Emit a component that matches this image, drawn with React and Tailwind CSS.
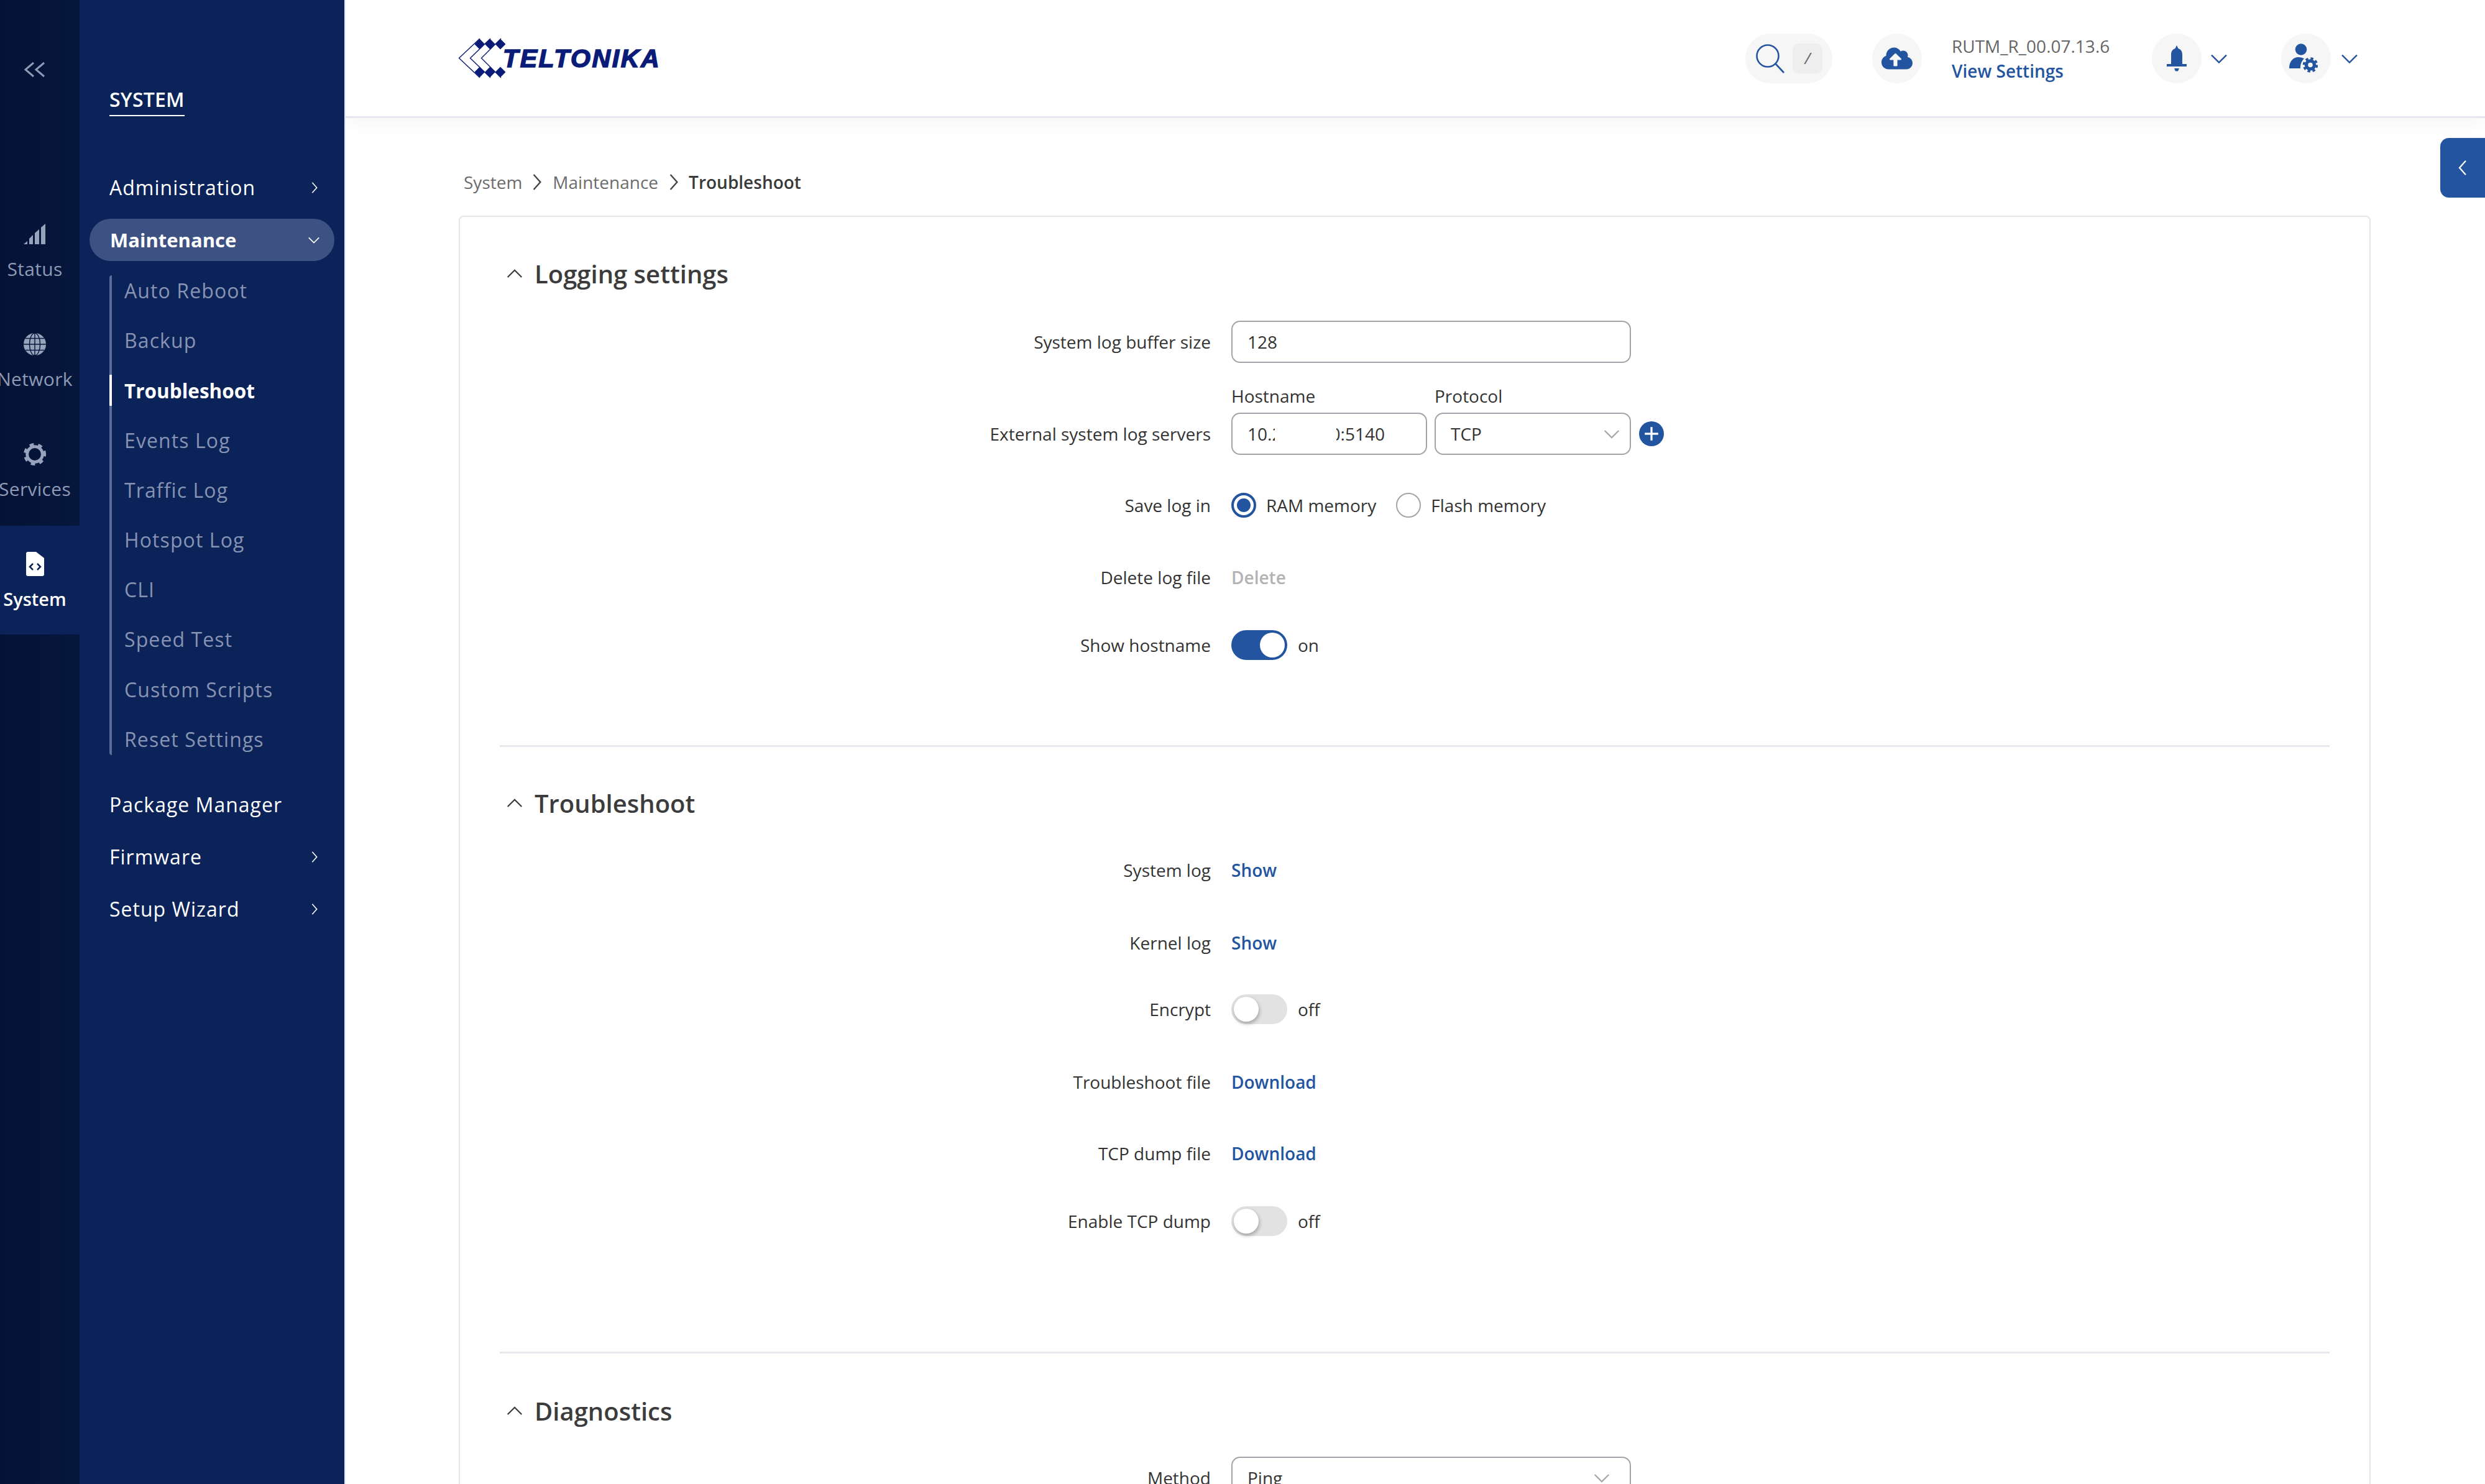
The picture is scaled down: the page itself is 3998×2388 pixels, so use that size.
import React from "react";
import { FaCloudUploadAlt } from "react-icons/fa";

const Chevron = ({ dir = "right", className }) => {
  const points = {
    right: "8,3 16,12 8,21",
    left: "16,3 8,12 16,21",
    down: "3,8 12,17 21,8",
    up: "3,16 12,7 21,16",
  };
  return (
    <svg viewBox="0 0 24 24" fill="none" stroke="currentColor" strokeWidth="1.8" className={className}>
      <polyline points={points[dir]} />
    </svg>
  );
};

const Logo = () => (
  <div className="flex items-center h-[80px] w-[330px] -ml-[8px]">
    <svg viewBox="0 0 100 75" className="w-[100px] h-[75px] -mr-[21px] shrink-0">
      <polyline points="42,6 8.5,37.5 42,69" fill="none" stroke="#0a1c78" strokeWidth="1.4" />
      <polyline points="59,6 26.5,37.5 59,69" fill="none" stroke="#0a1c78" strokeWidth="1.4" />
      <polyline points="76,6 44.5,37.5 76,69" fill="none" stroke="#0a1c78" strokeWidth="1.4" />
      <polygon points="41.7,6.5 50,15 41.7,23.5 33.4,15" fill="#0a1c78" />
      <polygon points="58.4,6.5 66.7,15 58.4,23.5 50,15" fill="#0a1c78" />
      <polygon points="75,6.5 83.5,15 75,23.5 66.7,15" fill="#0a1c78" />
      <polygon points="41.7,51.5 50,60 41.7,68.5 33.4,60" fill="#0a1c78" />
      <polygon points="58.4,51.5 66.7,60 58.4,68.5 50,60" fill="#0a1c78" />
      <polygon points="75,51.5 83.5,60 75,68.5 66.7,60" fill="#0a1c78" />
    </svg>
    <span className="font-['Liberation_Sans',sans-serif] font-bold italic text-[41px] leading-none text-[#0a1c78] tracking-[2.6px] [-webkit-text-stroke:1.6px_#0a1c78] mt-[2px]">
      TELTONIKA
    </span>
  </div>
);

const SearchIcon = () => (
  <svg viewBox="0 0 48 48" fill="none" stroke="#2354a0" strokeWidth="2.6" className="w-[48px] h-[48px]">
    <circle cx="20" cy="20" r="17.5" />
    <line x1="32.5" y1="32.5" x2="46" y2="47" />
  </svg>
);

const BellIcon = () => (
  <svg viewBox="0 0 32 42" fill="#2354a0" className="w-[32px] h-[42px]">
    <path d="M16 0l2.5 5c4.500 1.400 6.500 5 6.500 10v15H7V15c0-5 2-8.600 6.500-10z" />
    <rect x="0" y="30" width="32" height="4" />
    <path d="M12 37h8l-2 4.500h-4z" />
  </svg>
);

const UserGearIcon = () => (
  <svg viewBox="0 0 46 47" className="w-[46px] h-[47px]">
    <circle cx="19" cy="9.500" r="9.300" fill="#2354a0" />
    <path d="M0 40c0-11 6-18 15-18 4 0 7 1 9 2.500-4.500 4-6 9-6 15.500z" fill="#2354a0" />
    <circle cx="34" cy="34.500" r="6.500" fill="none" stroke="#2354a0" strokeWidth="5.500" />
    <circle cx="34" cy="34.500" r="10.500" fill="none" stroke="#2354a0" strokeWidth="3.500" strokeDasharray="4.500 3.750" />
  </svg>
);

const StatusIcon = () => (
  <svg viewBox="0 0 36 34" fill="#97a2bb" className="w-[36px] h-[34px]">
    <polygon points="0,33 6,28 6,33" />
    <polygon points="9,33 9,24 15,18 15,33" />
    <polygon points="18,33 18,15 25,9 25,33" />
    <polygon points="28,33 28,6 35,0 35,33" />
  </svg>
);

const GlobeIcon = () => (
  <svg viewBox="0 0 40 40" className="w-[38px] h-[38px]">
    <circle cx="20" cy="20" r="19" fill="#97a2bb" />
    <g fill="none" stroke="#05163c" strokeWidth="1.500">
      <ellipse cx="20" cy="20" rx="9" ry="19" />
      <line x1="20" y1="1" x2="20" y2="39" />
      <line x1="1" y1="20" x2="39" y2="20" />
      <line x1="4" y1="10" x2="36" y2="10" />
      <line x1="4" y1="30" x2="36" y2="30" />
    </g>
  </svg>
);

const GearIcon = () => (
  <svg viewBox="0 0 40 40" fill="none" stroke="#97a2bb" className="w-[38px] h-[38px]">
    <circle cx="20" cy="20" r="13" strokeWidth="5" />
    <circle cx="20" cy="20" r="16.500" strokeWidth="5" strokeDasharray="7 7.400" strokeDashoffset="3.500" />
  </svg>
);

const SystemIcon = () => (
  <svg viewBox="0 0 29 40" className="w-[29px] h-[40px]">
    <path d="M3 0h13l13 10v26a3 3 0 0 1-3 3H3a3 3 0 0 1-3-3V3a3 3 0 0 1 3-3z" fill="#ffffff" />
    <polyline points="11,19 6,24 11,29" fill="none" stroke="#0b2359" strokeWidth="2.500" />
    <polyline points="18,19 23,24 18,29" fill="none" stroke="#0b2359" strokeWidth="2.500" />
  </svg>
);

const railItems = [
  { name: "Status", icon: <StatusIcon /> },
  { name: "Network", icon: <GlobeIcon /> },
  { name: "Services", icon: <GearIcon /> },
];

const subItems = ["Auto Reboot", "Backup", "Troubleshoot", "Events Log", "Traffic Log", "Hotspot Log", "CLI", "Speed Test", "Custom Scripts", "Reset Settings"];

const Rail = () => (
  <div className="w-[128px] h-full shrink-0 bg-gradient-to-r from-[#041236] to-[#06173d] overflow-hidden">
    <div className="h-[315px] pt-[92px] pr-[16px] flex justify-center text-[#8f9ab4]">
      <svg viewBox="0 0 36 28" fill="none" stroke="currentColor" strokeWidth="3" className="w-[36px] h-[28px] mt-[6px]">
        <polyline points="16,3 3,14 16,25" />
        <polyline points="33,3 20,14 33,25" />
      </svg>
    </div>
    {railItems.map((item) => (
      <div key={item.name} className="h-[177px] pt-[34px] pr-[16px] flex flex-col items-center">
        <div className="h-[56px] flex items-center justify-center">{item.icon}</div>
        <div className="mt-[9px] text-[30px] leading-[38px] tracking-[0.3px] text-[#8f9ab4] whitespace-nowrap">{item.name}</div>
      </div>
    ))}
    <div className="h-[175px] pt-[34px] pr-[16px] flex flex-col items-center bg-[#0b2359]">
      <div className="h-[56px] flex items-center justify-center"><SystemIcon /></div>
      <div className="mt-[9px] text-[29px] leading-[38px] font-semibold text-white whitespace-nowrap">System</div>
    </div>
  </div>
);

const NavRow = ({ label, chevron, className }) => (
  <div className={"ml-[16px] w-[394px] h-[68px] pl-[32px] pr-[21px] flex items-center justify-between text-white text-[32px] tracking-[1px] whitespace-nowrap " + className}>
    <span>{label}</span>
    {chevron && <Chevron className="w-[22px] h-[22px]" />}
  </div>
);

const Sidebar = () => (
  <div className="w-[428px] h-full shrink-0 bg-[#0b2359] border-r-2 border-[#dfe5f4]">
    <div className="pl-[48px] pt-[140px] h-[268px]">
      <span className="inline-block text-white text-[32px] leading-[40px] font-semibold tracking-[0.2px] pb-[5px] border-b-[2px] border-white">SYSTEM</span>
    </div>
    <NavRow label="Administration" chevron />
    <div className="ml-[16px] mt-[16px] w-[394px] h-[68px] pl-[33px] pr-[22px] rounded-full bg-[#3d5282] flex items-center justify-between text-white text-[31px] font-bold whitespace-nowrap">
      <span>Maintenance</span>
      <Chevron dir="down" className="w-[22px] h-[22px]" />
    </div>
    <div className="ml-[48px] mt-[23px] border-l-4 border-[#5b6d9b] flex flex-col gap-[30.2px] rounded-sm">
      {subItems.map((s) =>
        s === "Troubleshoot" ? (
          <div key={s} className="-ml-[4px] h-[50px] border-l-4 border-white pl-[20px] flex items-center text-[31.5px] font-bold text-white">{s}</div>
        ) : (
          <div key={s} className="h-[50px] pl-[20px] flex items-center text-[32px] tracking-[1.1px] text-[#8793b2]">{s}</div>
        )
      )}
    </div>
    <NavRow label="Package Manager" className="mt-[46px]" />
    <NavRow label="Firmware" chevron className="mt-[16px]" />
    <NavRow label="Setup Wizard" chevron className="mt-[16px]" />
  </div>
);

const Header = () => (
  <div className="relative z-10 h-[190px] shrink-0 bg-white border-b-[3px] border-[#e6e6ef] shadow-[0_10px_24px_rgba(0,0,0,0.035)] pl-[182px] pr-[202px] flex items-center text-[#2354a0]">
    <Logo />
    <div className="ml-auto w-[140px] h-[80px] rounded-full bg-[#f6f6f7] flex items-center pl-[16px]">
      <SearchIcon />
      <div className="ml-[12px] w-[48px] h-[48px] rounded-[10px] bg-[#eeeeef] flex items-center justify-center text-[26px] italic text-[#666]">/</div>
    </div>
    <div className="ml-[64px] w-[80px] h-[80px] rounded-full bg-[#f6f6f7] flex items-center justify-center">
      <FaCloudUploadAlt className="w-[50px] h-[40px]" />
    </div>
    <div className="ml-[48px] w-[322px] flex flex-col">
      <span className="text-[28px] leading-[40px] text-[#666]">RUTM_R_00.07.13.6</span>
      <span className="text-[28px] leading-[40px] font-semibold text-[#2354a0]">View Settings</span>
    </div>
    <div className="w-[80px] h-[80px] rounded-full bg-[#f6f6f7] flex items-center justify-center"><BellIcon /></div>
    <Chevron dir="down" className="ml-[12px] w-[32px] h-[32px]" />
    <div className="ml-[84px] w-[80px] h-[80px] rounded-full bg-[#f6f6f7] flex items-center justify-center pr-[8px]"><UserGearIcon /></div>
    <Chevron dir="down" className="ml-[14px] w-[32px] h-[32px]" />
  </div>
);

const Row = ({ label, children, className }) => (
  <div className={"flex items-center h-[68px] " + className}>
    <div className="w-[1144px] shrink-0 text-right text-[28px] text-[#333]">{label}</div>
    <div className="ml-[33px] flex items-center text-[28px] text-[#333]">{children}</div>
  </div>
);

const Heading = ({ title, className }) => (
  <div className={"flex items-center h-[68px] pl-[9px] text-[#3c3c3c] " + className}>
    <Chevron dir="up" className="w-[30px] h-[30px]" />
    <span className="ml-[17px] text-[40px] font-semibold">{title}</span>
  </div>
);

const Toggle = ({ on }) => (
  <div className="flex items-center">
    {on ? (
      <div className="w-[90px] h-[48px] rounded-full bg-[#2354a0] p-[4px] flex justify-end">
        <div className="w-[40px] h-[40px] rounded-full bg-white" />
      </div>
    ) : (
      <div className="w-[90px] h-[48px] rounded-full bg-[#e2e2e2] p-[4px] flex">
        <div className="w-[40px] h-[40px] rounded-full bg-white shadow-[1px_3px_6px_rgba(0,0,0,0.3)]" />
      </div>
    )}
    <span className="ml-[17px]">{on ? "on" : "off"}</span>
  </div>
);

const Radio = ({ on, label, className }) => (
  <div className={"flex items-center " + className}>
    {on ? (
      <div className="w-[40px] h-[40px] rounded-full border-[4px] border-[#2354a0] flex items-center justify-center">
        <div className="w-[22px] h-[22px] rounded-full bg-[#2354a0]" />
      </div>
    ) : (
      <div className="w-[40px] h-[40px] rounded-full border-2 border-[#a3a5ab]" />
    )}
    <span className="ml-[16px]">{label}</span>
  </div>
);

const LinkText = ({ children }) => <span className="font-semibold text-[#2354a0]">{children}</span>;

const Divider = ({ className }) => <div className={"h-[3px] bg-[#e8e8ef] " + className} />;

const Form = () => (
  <div className="border-2 border-b-0 border-[#e6e6ec] rounded-t-[8px] px-[64px] pt-[58px] bg-white">
    <Heading title="Logging settings" />
    <Row label="System log buffer size" className="mt-[41px]">
      <div className="w-[643px] h-[68px] rounded-[14px] border-2 border-[#a3a5ab] pl-[24px] flex items-center">128</div>
    </Row>
    <div className="mt-[36px] ml-[1177px] flex h-[34px] items-center text-[28px] text-[#333]">
      <span className="w-[327px]">Hostname</span>
      <span>Protocol</span>
    </div>
    <Row label="External system log servers" className="mt-[10px]">
      <div className="w-[315px] h-[68px] rounded-[14px] border-2 border-[#a3a5ab] pl-[24px] flex items-center whitespace-nowrap">
        <span className="w-[44px] overflow-hidden">10.2</span>
        <span className="ml-[99px] w-[78px] overflow-hidden flex justify-end">0:5140</span>
      </div>
      <div className="ml-[12px] w-[316px] h-[68px] rounded-[14px] border-2 border-[#a3a5ab] pl-[24px] pr-[14px] flex items-center justify-between">
        TCP
        <Chevron dir="down" className="w-[30px] h-[30px] text-[#a3a5ab]" />
      </div>
      <div className="ml-[13px] w-[40px] h-[40px] rounded-full bg-[#2354a0] flex items-center justify-center">
        <svg viewBox="0 0 24 24" stroke="#ffffff" strokeWidth="3" className="w-[26px] h-[26px]">
          <line x1="12" y1="2" x2="12" y2="22" />
          <line x1="2" y1="12" x2="22" y2="12" />
        </svg>
      </div>
    </Row>
    <Row label="Save log in" className="mt-[47px]">
      <Radio on label="RAM memory" />
      <Radio label="Flash memory" className="ml-[32px]" />
    </Row>
    <Row label="Delete log file" className="mt-[48px]">
      <span className="font-semibold text-[#b3b3b3]">Delete</span>
    </Row>
    <Row label="Show hostname" className="mt-[41px]"><Toggle on /></Row>
    <Divider className="mt-[127px]" />

    <Heading title="Troubleshoot" className="mt-[57px]" />
    <Row label="System log" className="mt-[39px]"><LinkText>Show</LinkText></Row>
    <Row label="Kernel log" className="mt-[49px]"><LinkText>Show</LinkText></Row>
    <Row label="Encrypt" className="mt-[39px]"><Toggle /></Row>
    <Row label="Troubleshoot file" className="mt-[49px]"><LinkText>Download</LinkText></Row>
    <Row label="TCP dump file" className="mt-[47px]"><LinkText>Download</LinkText></Row>
    <Row label="Enable TCP dump" className="mt-[41px]"><Toggle /></Row>
    <Divider className="mt-[176px]" />

    <Heading title="Diagnostics" className="mt-[59px]" />
    <Row label="Method" className="mt-[39px]">
      <div className="w-[643px] h-[68px] rounded-[14px] border-2 border-[#a3a5ab] pl-[24px] pr-[30px] flex items-center justify-between">
        Ping
        <Chevron dir="down" className="w-[30px] h-[30px] text-[#a3a5ab]" />
      </div>
    </Row>
  </div>
);

export default function App() {
  return (
    <div className="relative w-screen h-screen overflow-hidden flex bg-white font-['Open_Sans',sans-serif]">
      <Rail />
      <Sidebar />
      <div className="flex-1 min-w-0 h-full flex flex-col overflow-hidden">
        <Header />
        <div className="pl-[182px] pr-[184px] pt-[86px]">
          <div className="pl-[8px] h-[34px] mb-[37px] flex items-center text-[28px] text-[#6c6c6c]">
            <span>System</span>
            <Chevron className="ml-[8px] mr-[9px] w-[32px] h-[32px] text-[#444]" />
            <span>Maintenance</span>
            <Chevron className="ml-[9px] mr-[8px] w-[32px] h-[32px] text-[#444]" />
            <span className="font-semibold text-[#3a3a3a]">Troubleshoot</span>
          </div>
          <Form />
        </div>
      </div>
      <div className="absolute right-0 top-[222px] w-[72px] h-[96px] rounded-l-[14px] bg-[#2354a0] text-white flex items-center justify-center">
        <Chevron dir="left" className="w-[30px] h-[30px]" />
      </div>
    </div>
  );
}
